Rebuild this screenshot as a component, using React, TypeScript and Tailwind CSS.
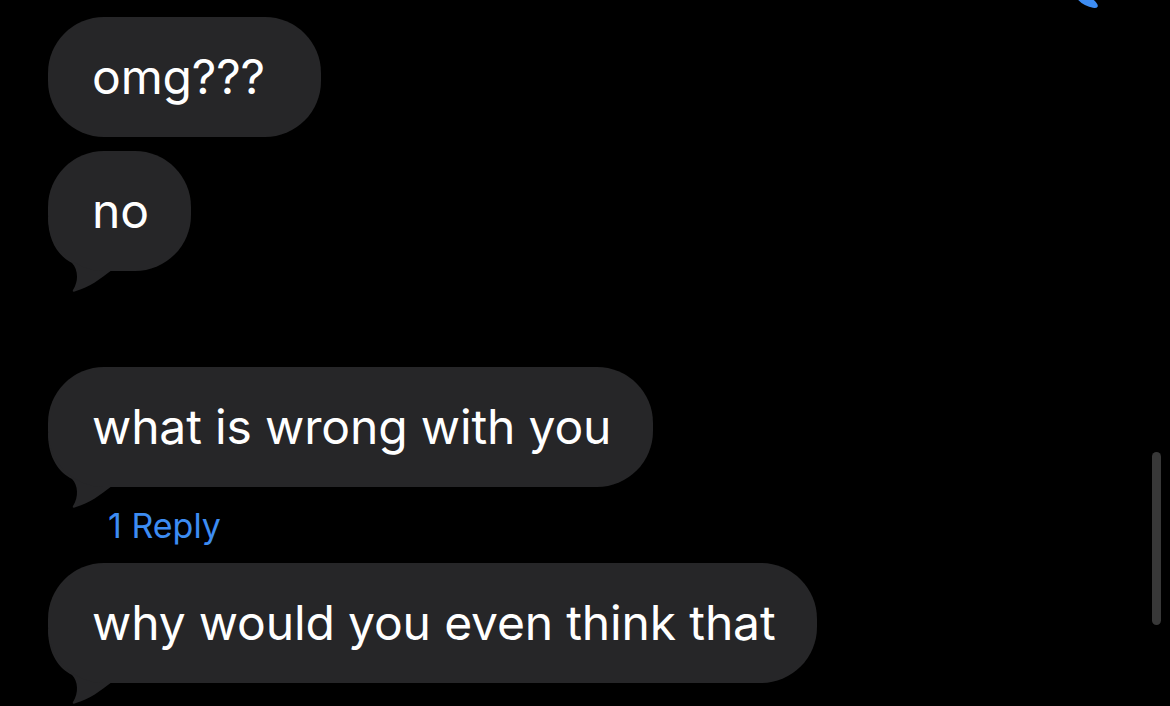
import React from "react";

function Tail() {
  return (
    <svg
      className="absolute left-0 top-0 overflow-visible pointer-events-none"
      width="70"
      height="150"
      viewBox="0 0 70 150"
    >
      <path
        d="M0,66 C0,92 12,106 24,112 C30,118 31,130 25,139 C24,141 26,141 28,140 C42,136 52,128 64,119 L64,66 Z"
        fill="#262628"
      />
    </svg>
  );
}

function Bubble({ text, tail, wide }: { text: string; tail?: boolean; wide?: boolean }) {
  return (
    <div className="relative self-start">
      {tail && <Tail />}
      <div
        className={
          "relative h-[120px] rounded-[56px] bg-[#262628] pl-[44px] text-[48px] leading-[120px] text-white whitespace-nowrap tracking-[-0.15px] [font-family:Inter,'Liberation_Sans',sans-serif] " +
          (wide ? "w-[273px]" : "pr-[42px]")
        }
      >
        {text}
      </div>
    </div>
  );
}

export default function App() {
  return (
    <div className="relative w-[1170px] h-[706px] overflow-hidden bg-black">
      <div className="flex flex-col pl-[48px] pt-[17px]">
        <Bubble text="omg???" wide />
        <div className="h-[14px]" />
        <Bubble text="no" tail />
        <div className="h-[96px]" />
        <Bubble text="what is wrong with you" tail />
        <div className="mt-[19px] mb-[17px] pl-[60px] text-[34px] leading-[40px] text-[#3d8cf2] [font-family:Inter,'Liberation_Sans',sans-serif]">
          1 Reply
        </div>
        <Bubble text="why would you even think that" tail />
      </div>

      <svg className="absolute left-[1070px] top-[-10px]" width="40" height="24" viewBox="0 0 40 24">
        <ellipse cx="17" cy="11" rx="12" ry="4.5" transform="rotate(28 17 11)" fill="#3d8cf2" />
      </svg>

      <div className="absolute left-[1152px] top-[452px] h-[173px] w-[9px] rounded-full bg-[#383838]" />
    </div>
  );
}
